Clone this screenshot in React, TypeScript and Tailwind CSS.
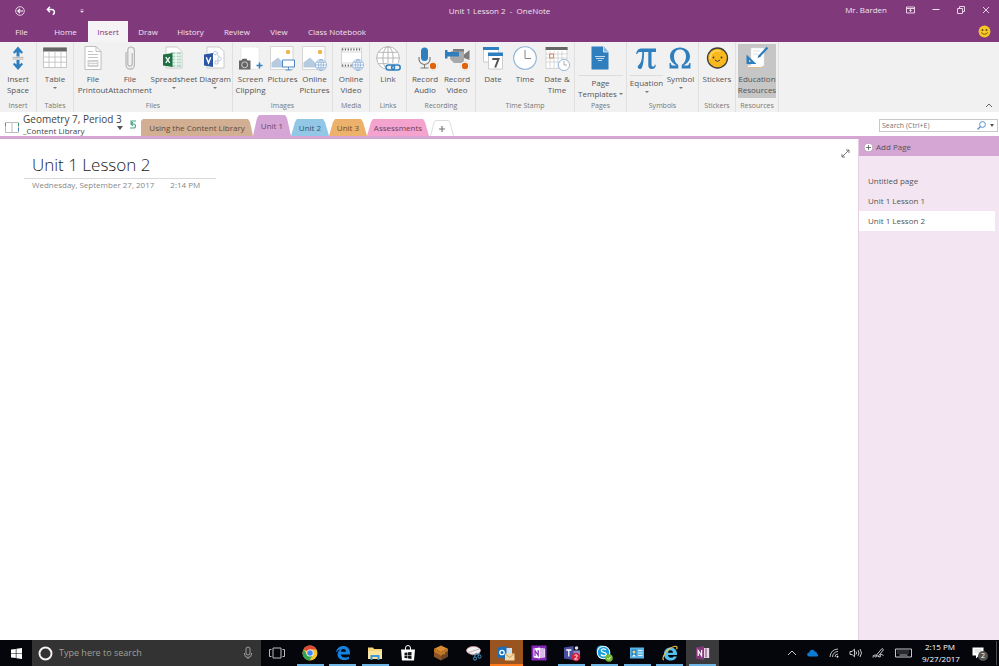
import { useState, type ReactNode } from 'react';

const BLUE = '#2f7fbf';

/* ---------- shared icon pieces ---------- */

function Svg({ w, h, box, label, children }: { w: number; h: number; box?: string; label?: string; children: ReactNode }) {
  return (
    <svg width={w} height={h} viewBox={box ?? `0 0 ${w} ${h}`} fill="none" className="shrink-0" aria-hidden={label ? undefined : true} aria-label={label}>
      {children}
    </svg>
  );
}

function Globe({ cx, cy, r, stroke }: { cx: number; cy: number; r: number; stroke: string }) {
  return (
    <g stroke={stroke} strokeWidth={r > 8 ? 0.8 : 0.7} fill="#fff">
      <circle cx={cx} cy={cy} r={r} />
      <ellipse cx={cx} cy={cy} rx={r * 0.45} ry={r} fill="none" />
      <path d={`M${cx - r} ${cy}h${r * 2}M${cx} ${cy - r}v${r * 2}M${cx - r * 0.85} ${cy - r * 0.5}h${r * 1.7}M${cx - r * 0.85} ${cy + r * 0.5}h${r * 1.7}`} />
    </g>
  );
}

function RecordDot() {
  return (
    <>
      <circle cx="20" cy="20" r="4.6" fill="#fff" stroke="#d0d0d0" strokeWidth="0.5" />
      <circle cx="20" cy="20" r="3.2" fill="#e0640f" />
    </>
  );
}

/* ---------- ribbon icons, drawn on a 25 unit square ---------- */

const icons: Record<string, ReactNode> = {
  space: (
    <>
      <path d="M12 .500l5 5.800-1.300 1.500-2.200-1.700V10.500h-3V6.100L8.300 7.800 7 6.300zM12 24l5-5.800-1.300-1.500-2.200 1.700V14h-3v4.400l-2.200-1.700L7 18.200z" fill={BLUE} />
      <path d="M6.500 11.400h11M6.500 13.100h11" stroke="#a9a9a9" strokeWidth="0.800" />
    </>
  ),
  table: (
    <>
      <path d="M.5 2h23v19.500H.5z" fill="#fff" stroke="#b0b0b0" strokeWidth="0.700" />
      <path d="M.2 1.500h23.600v4H.2z" fill="#666" />
      <path d="M6 5.500v16M12 5.500v16M18 5.500v16M.5 11h23M.5 16.200h23" stroke="#bdbdbd" strokeWidth="0.800" />
    </>
  ),
  printout: (
    <>
      <path d="M4 .5h11l5 5v18H4z" fill="#fff" stroke="#b0b0b0" strokeWidth="0.800" />
      <path d="M15 .5v5h5" stroke="#b0b0b0" strokeWidth="0.800" />
      <path d="M7 5.500h5M7 8.500h10M7 11.500h10" stroke="#c4c4c4" />
      <path d="M6.500 14h11v7h-11z" fill="#d2d2d2" />
      <path d="M8 16.500h8M8 18.500h8" stroke="#fff" strokeWidth="0.800" />
    </>
  ),
  clip: (
    <path d="M8 6v13a4.200 4.200 0 0 0 8.400 0V4.300a3.300 3.300 0 0 0-6.600 0V18a2.200 2.200 0 0 0 4.400 0V7" stroke="#b5b5b5" strokeWidth="1.200" />
  ),
  sheet: (
    <>
      <path d="M4 1h11l5 4.500V22H4z" fill="#fff" stroke="#b7b7b7" strokeWidth="0.700" />
      <path d="M9 6h10v15H9z" fill="#b5dbc6" />
      <path d="M9 9h10M9 12h10M9 15h10M9 18h10M14 6v15" stroke="#fff" />
      <path d="M1 8.500l9.500-1.500v14L1 19.500z" fill="#1c7044" />
      <path d="M3.800 11.200l4 5.600M7.800 11.200l-4 5.600" stroke="#fff" strokeWidth="1.300" />
    </>
  ),
  diagram: (
    <>
      <path d="M4 1h12l5 4.500V22H4z" fill="#fff" stroke="#b7b7b7" strokeWidth="0.700" />
      <path d="M12 5l3 2-3 2-2-2zM16.500 11a1.800 1.800 0 1 0 .1 0M12 15h3v3h-3zM14 8l2 3M16 14l-2 2" stroke="#aebfd5" strokeWidth="0.800" />
      <path d="M1 8.500l9-1.500v14l-9-1.500z" fill="#2a56a4" />
      <path d="M3.300 11.200l2.200 5.600 2.300-5.600" stroke="#fff" strokeWidth="1.400" />
    </>
  ),
  screen: (
    <>
      <path d="M3 1h18v22H3z" fill="#fff" stroke="#d6d6d6" strokeWidth="0.700" strokeDasharray="1.500 1" />
      <path d="M1 14.500h2.500l1-1.700h4l1 1.700H12.500v9H1z" fill="#666" />
      <circle cx="6.700" cy="18.800" r="3" fill="#666" stroke="#ddd" strokeWidth="0.900" />
      <path d="M21.500 16.500v6M18.500 19.500h6" stroke={BLUE} strokeWidth="1.500" />
    </>
  ),
  pictures: (
    <>
      <path d="M.5.500h22.500v23H.5z" fill="#fff" stroke="#c6c6c6" strokeWidth="0.700" />
      <path d="M1.500 21.500v-5L8 11.500l6 6v4z" fill="#b7cbe0" />
      <circle cx="18" cy="6" r="2.200" fill="#f4b74e" />
      <path d="M12.500 14h12v7h-12z" fill="#fff" stroke="#4c87c4" strokeWidth="1" />
      <path d="M18.500 21v3M15.500 24h6" stroke="#4c87c4" strokeWidth="0.900" />
    </>
  ),
  onlinePictures: (
    <>
      <path d="M.5.500h22.500v23H.5z" fill="#fff" stroke="#c6c6c6" strokeWidth="0.700" />
      <path d="M1.500 21.500v-5L8 11.500l6 6v4z" fill="#b7cbe0" />
      <circle cx="18" cy="6" r="2.200" fill="#f4b74e" />
      <Globe cx={19} cy={19} r={5.500} stroke="#7ea6d1" />
    </>
  ),
  video: (
    <>
      <path d="M2.500 2h20v19h-20z" fill="#fff" stroke="#bdbdbd" strokeWidth="0.600" />
      <path d="M3 3.500h19M3 19.500h13" stroke="#696969" strokeWidth="1.800" strokeDasharray="1.300 1.500" />
      <path d="M3 6h19M3 17h13" stroke="#c8c8c8" strokeWidth="0.700" />
      <Globe cx={19} cy={19} r={5.500} stroke="#7ea6d1" />
    </>
  ),
  link: (
    <>
      <Globe cx={12} cy={12} r={11.300} stroke="#a8a8a8" />
      <g stroke="#f1f1f1" strokeWidth="3.500"><rect x="10.500" y="19" width="8" height="5" rx="2.500" /><rect x="16" y="19" width="8" height="5" rx="2.500" /></g>
      <g stroke={BLUE} strokeWidth="1.500"><rect x="10" y="19" width="8.500" height="5" rx="2.500" /><rect x="15.700" y="19" width="8.500" height="5" rx="2.500" /></g>
    </>
  ),
  mic: (
    <>
      <rect x="8" y="1.500" width="7" height="13.500" rx="3.500" fill={BLUE} />
      <path d="M6 11v2a5.500 5.500 0 0 0 11 0v-2M11.500 18.500V22M7.500 22h8" stroke="#7c7c7c" strokeWidth="1.200" />
      <RecordDot />
    </>
  ),
  camera: (
    <>
      <path d="M6 5h13v12H9l-4-4z" fill="#a9a9a9" />
      <path d="M19 8.500l5.500-4.500v10L19 12zM8 3h11v2.500H8z" fill="#7d7d7d" />
      <path d="M0 4h2.500v2H14v4.500H2.500v2H0z" fill={BLUE} />
      <RecordDot />
    </>
  ),
  date: (
    <>
      <path d="M2.500 2h15v14h-15z" fill="#fff" stroke="#b0b0b0" strokeWidth="0.600" />
      <path d="M2 1h16v3H2z" fill={BLUE} />
      <path d="M7.500 8h14v15h-14z" fill="#fff" stroke="#b0b0b0" strokeWidth="0.600" />
      <path d="M7 6.500h15v3.500H7z" fill={BLUE} />
      <path d="M11.300 13h6.200l-3.300 8.500" stroke="#555" strokeWidth="2" />
    </>
  ),
  time: (
    <>
      <circle cx="12" cy="12" r="11.300" fill="#fff" stroke="#8fb5d8" strokeWidth="1.100" />
      <path d="M12 4v8.500h6" stroke="#858585" strokeWidth="1" />
    </>
  ),
  dateTime: (
    <>
      <path d="M1 1.500h21v21H1z" fill="#fff" stroke="#c0c0c0" strokeWidth="0.600" />
      <path d="M.6 1h22v3H.6z" fill="#666" />
      <path d="M5 5v17M9 5v17M13 5v17M17 5v17M1 8h21M1 12h21M1 16h21" stroke="#c9c9c9" strokeWidth="0.700" />
      <path d="M4.500 8h4v4h-4z" stroke="#e8793e" strokeWidth="0.900" />
      <circle cx="19" cy="19" r="5.600" fill="#fff" stroke="#8fb5d8" strokeWidth="0.900" />
      <path d="M19 15v4h3" stroke="#999" strokeWidth="0.800" />
    </>
  ),
  page: (
    <>
      <path d="M3.500.500h12l5 5.500v17.500h-17z" fill={BLUE} />
      <path d="M15.500.500V6h5" fill="#8db9df" stroke="#f1f1f1" strokeWidth="0.800" />
      <path d="M7 10.500h10M8 12.500h8M10 14.500h4" stroke="#d2e4f3" strokeWidth="0.900" />
    </>
  ),
  pi: (
    <path d="M2 8C3 3.500 5 2.500 8 2.500h14V6h-4.500v12.500c0 1.500.5 2 1.500 2s1.500-.5 1.800-1.800h1c-.1 3-1.600 4.300-4 4.300-2.600 0-3.500-1.500-3.500-4V6h-4.300c0 6-.5 11-1.600 14.500C7.800 22.500 7 23 5.800 23c-1.300 0-2.100-.8-2.100-1.900 0-1.200.9-2 2.100-3.300C7.500 16 8.200 12 8.300 6H7C5 6 3.900 6.300 3 8z" fill={BLUE} />
  ),
  omega: (
    <path d="M1.500 22.500V17h1.200c.4 2 1 2.500 2.600 2.500h3.400C4.500 17.500 2 14.500 2 10.300 2 5 6.300 1.500 12 1.500S22 5 22 10.300c0 4.200-2.500 7.200-6.700 9.200h3.400c1.600 0 2.200-.5 2.600-2.500h1.200v5.500h-8.800V19c2.700-1.800 4.300-4.600 4.300-8.500 0-4.300-2.300-7-6-7s-6 2.700-6 7c0 3.900 1.600 6.700 4.300 8.500v3.500z" fill={BLUE} />
  ),
  sticker: (
    <>
      <circle cx="12.500" cy="12" r="10" fill="#f9b81d" stroke="#3c3c3c" strokeWidth="1.300" />
      <path d="M5.500 13a7 7 0 0 1 10-7.500" stroke="#ffd768" strokeWidth="1.500" />
      <circle cx="8.500" cy="11.500" r="1" fill="#3c3c3c" />
      <circle cx="16.500" cy="11.500" r="1" fill="#3c3c3c" />
      <path d="M10 14q2.500 3 5 0" stroke="#3c3c3c" strokeWidth="1" />
    </>
  ),
  education: (
    <>
      <path d="M6 2h13v18H6z" fill="#fff" stroke="#ddd" strokeWidth="0.500" />
      <path d="M8 5h7M8 8h5" stroke="#d5d5d5" strokeWidth="0.800" />
      <path d="M3 19.500h14v2H3z" fill="#fff" />
      <path d="M3 21.500h14" stroke="#e8b98b" />
      <path d="M1.500 8.500l10 9.500h-10z" fill={BLUE} />
      <path d="M4 13.500l2.300 2.300H4z" fill="#d9d9d9" />
      <path d="M22.500 1.500l-8 8.500" stroke={BLUE} strokeWidth="2.200" />
      <path d="M13.800 8.800l1.900 2-3.200 1.200z" fill="#2d6aa3" />
    </>
  ),
};

/* ---------- ribbon ---------- */

type Tool = { icon: string; lines: string[]; width: string; arrow?: boolean; inlineArrow?: boolean; split?: boolean; active?: boolean };
type Group = { name: string; width: string; tools: Tool[] };

const groups: Group[] = [
  { name: 'Insert', width: 'w-[37px]', tools: [{ icon: 'space', lines: ['Insert', 'Space'], width: 'w-9' }] },
  { name: 'Tables', width: 'w-[37px]', tools: [{ icon: 'table', lines: ['Table'], width: 'w-9', arrow: true }] },
  {
    name: 'Files', width: 'w-[159px]', tools: [
      { icon: 'printout', lines: ['File', 'Printout'], width: 'w-9' },
      { icon: 'clip', lines: ['File', 'Attachment'], width: 'w-[38px]' },
      { icon: 'sheet', lines: ['Spreadsheet'], width: 'w-[50px]', arrow: true },
      { icon: 'diagram', lines: ['Diagram'], width: 'w-8', arrow: true },
    ],
  },
  {
    name: 'Images', width: 'w-[100px]', tools: [
      { icon: 'screen', lines: ['Screen', 'Clipping'], width: 'w-9' },
      { icon: 'pictures', lines: ['Pictures'], width: 'w-7' },
      { icon: 'onlinePictures', lines: ['Online', 'Pictures'], width: 'w-9' },
    ],
  },
  { name: 'Media', width: 'w-[37px]', tools: [{ icon: 'video', lines: ['Online', 'Video'], width: 'w-9' }] },
  { name: 'Links', width: 'w-[37px]', tools: [{ icon: 'link', lines: ['Link'], width: 'w-9' }] },
  {
    name: 'Recording', width: 'w-[69px]', tools: [
      { icon: 'mic', lines: ['Record', 'Audio'], width: 'w-8' },
      { icon: 'camera', lines: ['Record', 'Video'], width: 'w-8' },
    ],
  },
  {
    name: 'Time Stamp', width: 'w-[99px]', tools: [
      { icon: 'date', lines: ['Date'], width: 'w-9' },
      { icon: 'time', lines: ['Time'], width: 'w-7' },
      { icon: 'dateTime', lines: ['Date &', 'Time'], width: 'w-9' },
    ],
  },
  { name: 'Pages', width: 'w-[52px]', tools: [{ icon: 'page', lines: ['Page', 'Templates'], width: 'w-12', inlineArrow: true, split: true }] },
  {
    name: 'Symbols', width: 'w-[72px]', tools: [
      { icon: 'pi', lines: ['Equation'], width: 'w-9', arrow: true, split: true },
      { icon: 'omega', lines: ['Symbol'], width: 'w-8', arrow: true },
    ],
  },
  { name: 'Stickers', width: 'w-[37px]', tools: [{ icon: 'sticker', lines: ['Stickers'], width: 'w-9' }] },
  { name: 'Resources', width: 'w-[43px]', tools: [{ icon: 'education', lines: ['Education', 'Resources'], width: 'w-[38px]', active: true }] },
];

function Arrow() {
  return (
    <Svg w={4} h={2}>
      <path d="M0 0h4L2 2z" fill="#777" />
    </Svg>
  );
}

function ToolButton({ tool }: { tool: Tool }) {
  return (
    <button type="button" className={`flex h-[54px] shrink-0 flex-col items-center pt-0.5 ${tool.width} ${tool.active ? 'bg-[#c6c6c6]' : ''}`}>
      <Svg w={25} h={25} box="0 0 25 25">{icons[tool.icon]}</Svg>
      <span className={`flex flex-col items-center text-[8px] leading-[11px] whitespace-nowrap text-[#555] ${tool.split ? 'mt-1 border-t border-[#dcdcdc] pt-px' : 'mt-0.5'}`}>
        {tool.lines.map((line, i) => (
          <span key={line} className="flex items-center gap-0.5">
            {line}
            {tool.inlineArrow && i === tool.lines.length - 1 && <Arrow />}
          </span>
        ))}
        {tool.arrow && <span className="flex h-2 items-center"><Arrow /></span>}
      </span>
    </button>
  );
}

function Ribbon() {
  return (
    <div className="flex h-[70px] bg-[#f1f1f1]">
      {groups.map((g) => (
        <section key={g.name} aria-label={g.name} className={`flex shrink-0 flex-col items-center border-r border-[#e0e0e0] pt-0.5 ${g.width}`}>
          <div className="flex flex-1 justify-center">
            {g.tools.map((t) => <ToolButton key={t.icon} tool={t} />)}
          </div>
          <span className="pb-px text-[7px] leading-[10px] text-[#777]">{g.name}</span>
        </section>
      ))}
      <button type="button" aria-label="Collapse the ribbon" className="mt-auto mr-1.5 mb-1 ml-auto">
        <Svg w={8} h={5}><path d="M1 4l3-3 3 3" stroke="#666" /></Svg>
      </button>
    </div>
  );
}

/* ---------- title bar ---------- */

const menu = [
  ['File', 'w-[43px]'], ['Home', 'w-[45px]'], ['Insert', 'w-10'], ['Draw', 'w-10'], ['History', 'w-[45px]'],
  ['Review', 'w-12'], ['View', 'w-9'], ['Class Notebook', 'w-20'],
];

function TitleBar() {
  return (
    <header className="bg-[#80397b] text-[8px] text-[#f0e2ef]">
      <div className="grid h-[21px] grid-cols-3 items-center">
        <div className="flex items-center pl-[15px]">
          <button type="button" aria-label="Back" className="mr-[21px]">
            <Svg w={10} h={10}><circle cx="5" cy="5" r="4.300" stroke="#efe0ee" strokeWidth="0.900" /><path d="M8 5H2.800M5 2.800L2.800 5 5 7.200" stroke="#fff" strokeWidth="1.100" /></Svg>
          </button>
          <button type="button" aria-label="Undo" className="mr-6">
            <Svg w={10} h={10}><path d="M4 .800L1.300 3.500 4 6.200M1.500 3.500h4.200a2.700 2.700 0 0 1 1 5.200" stroke="#fff" strokeWidth="1.400" /></Svg>
          </button>
          <button type="button" aria-label="Customize toolbar">
            <Svg w={4} h={4}><path d="M.5.500h3M.5 2h3L2 3.500z" fill="#fff" stroke="#e6d3e5" strokeWidth="0.500" /></Svg>
          </button>
        </div>
        <span className="text-center">Unit 1 Lesson 2&nbsp; -&nbsp; OneNote</span>
        <div className="flex items-center justify-end gap-[17px] pr-[9px] pb-0.5">
          <span className="mr-0.5">Mr. Barden</span>
          <button type="button" aria-label="Ribbon display options"><Svg w={9} h={8}><path d="M.5 1h8v6h-8zM.5 2.500h8M4.500 6V3.500M3.200 4.700l1.300-1.300 1.300 1.300" stroke="#f0e2ef" strokeWidth="0.900" /></Svg></button>
          <button type="button" aria-label="Minimize"><Svg w={8} h={8}><path d="M.5 3.500h7" stroke="#f0e2ef" /></Svg></button>
          <button type="button" aria-label="Restore"><Svg w={8} h={8}><path d="M.5 2.500h5v5h-5zM2.500 2.500v-2h5v5h-2" stroke="#f0e2ef" strokeWidth="0.900" /></Svg></button>
          <button type="button" aria-label="Close"><Svg w={8} h={8}><path d="M1 1l6 6M7 1L1 7" stroke="#f0e2ef" strokeWidth="0.900" /></Svg></button>
        </div>
      </div>
      <nav className="flex h-[21px] items-stretch">
        {menu.map(([name, width]) => (
          <button key={name} type="button" className={`${width} text-center ${name === 'Insert' ? 'bg-[#f6f3f6] text-[#80397b]' : ''}`}>{name}</button>
        ))}
        <button type="button" aria-label="Send feedback" className="mr-2 ml-auto">
          <Svg w={13} h={13}><circle cx="6.500" cy="6.500" r="5.900" fill="#f6c625" /><circle cx="4.500" cy="5" r="0.900" fill="#57430c" /><circle cx="8.500" cy="5" r="0.900" fill="#57430c" /><path d="M3.200 7.500q3.300 3.600 6.600 0" stroke="#6b510c" strokeWidth="0.900" /></Svg>
        </button>
      </nav>
    </header>
  );
}

/* ---------- notebook and section tabs ---------- */

const slanted = '[clip-path:polygon(0_100%,4px_3px,6px_0,calc(100%_-_6px)_0,calc(100%_-_4px)_3px,100%_100%)]';
const leading = '[clip-path:polygon(0_100%,0_2px,2px_0,calc(100%_-_5px)_0,calc(100%_-_3px)_3px,100%_100%)]';

const sections = [
  { name: 'Using the Content Library', style: `h-[17px] w-[112px] bg-[#d2ae92] text-[#5c4c40] ${leading}` },
  { name: 'Unit 1', style: `h-[21px] w-[38px] bg-[#d5a6d5] text-[#6b486b] ${slanted}` },
  { name: 'Unit 2', style: `h-[17px] w-[38px] bg-[#92c7e6] text-[#33566a] ${slanted}` },
  { name: 'Unit 3', style: `h-[17px] w-[38px] bg-[#ecb26c] text-[#6b4c25] ${slanted}` },
  { name: 'Assessments', style: `h-[17px] w-[62px] bg-[#f4a3cf] text-[#6b4059] ${slanted}` },
];

function SectionBar() {
  const [query, setQuery] = useState('');
  return (
    <div className="flex h-[27px] border-b-[3px] border-[#d5a5d3] bg-white">
      <button type="button" className="flex w-[141px] shrink-0 items-center pl-[5px] text-left">
        <span className="mt-1.5">
          <Svg w={14} h={13}>
            <path d="M.5 1.500h6l.5.700.5-.700h6v10h-6l-.5.500-.5-.500h-6zM7 2v10" stroke="#aaa" strokeWidth="0.800" />
            <path d="M.5 2v3" stroke="#d9553f" /><path d="M13.500 2v3" stroke="#3b9a63" /><path d="M13.500 7v3" stroke="#3b7fc0" />
          </Svg>
        </span>
        <span className="ml-1 flex w-[92px] flex-col whitespace-nowrap text-[#444]">
          <span className="text-[10px] leading-[14px]">Geometry 7, Period 3</span>
          <span className="text-[8px] leading-[10px]">_Content Library</span>
        </span>
        <span className="mt-2 ml-0.5"><Svg w={6} h={4}><path d="M0 0h6L3 4z" fill="#555" /></Svg></span>
        <span className="ml-1.5"><Svg w={8} h={9}><path d="M7 1H2v3h2.500a2 2 0 0 1 0 4H1M2 4l2-1.800M2 4l2 1.800" stroke="#4aa583" strokeWidth="1.100" /></Svg></span>
      </button>
      <nav aria-label="Sections" className="flex items-end">
        {sections.map((s) => (
          <button key={s.name} type="button" className={`shrink-0 pt-px text-center text-[8px] whitespace-nowrap ${s.style}`}>{s.name}</button>
        ))}
        <button type="button" aria-label="Create a new section" className="ml-px">
          <Svg w={24} h={16}><path d="M.5 16L4 2.500Q4.500.500 6 .500h12q1.500 0 2 2L23.500 16" fill="#fff" stroke="#ddd" /><path d="M12 6v6M9 9h6" stroke="#777" strokeWidth="1.200" /></Svg>
        </button>
      </nav>
      <div className="mt-[7px] mr-px ml-auto flex h-[13px] w-[119px] items-center gap-1 border border-[#c9c9c9] pr-[3px] pl-0.5">
        <input aria-label="Search notes" value={query} onChange={(e) => setQuery(e.target.value)} placeholder="Search (Ctrl+E)" className="h-[11px] w-full min-w-0 bg-transparent text-[7px] leading-[11px] text-[#444] outline-none placeholder:text-[#777]" />
        <Svg w={9} h={9}><circle cx="5.500" cy="3.500" r="2.900" stroke="#5591c9" /><path d="M3.500 5.500L.5 8.500" stroke="#5591c9" strokeWidth="1.300" /></Svg>
        <Svg w={4} h={3}><path d="M0 0h4L2 3z" fill="#555" /></Svg>
      </div>
    </div>
  );
}

/* ---------- page and page list ---------- */

const pages = ['Untitled page', 'Unit 1 Lesson 1', 'Unit 1 Lesson 2'];

function Workspace() {
  return (
    <div className="flex flex-1">
      <main className="flex flex-1 items-start justify-between bg-white pt-3.5 pr-2 pl-6">
        <article className="w-48">
          <h1 className="border-b border-[#d8d8d8] pb-px pl-2 text-[17px] leading-6 font-light text-[#222]">Unit 1 Lesson 2</h1>
          <p className="flex gap-4 pl-2 text-[8px] leading-3 text-[#888]"><span>Wednesday, September 27, 2017</span><span>2:14 PM</span></p>
        </article>
        <button type="button" aria-label="Full page view" className="-mt-1"><Svg w={9} h={9}><path d="M5 1h3v3M4 8H1V5M1.200 7.800l6.600-6.600" stroke="#666" strokeWidth="0.900" /></Svg></button>
      </main>
      <aside className="w-[141px] shrink-0 border-l border-[#e5cfe4] bg-[#f3e6f2] text-[8px] text-[#555]">
        <button type="button" className="flex h-[17px] w-full items-center gap-[3px] bg-[#d5a5d3] pb-px pl-[5px]">
          <Svg w={9} h={9}><circle cx="4.500" cy="4.500" r="4.100" fill="#fff" stroke="#999" strokeWidth="0.500" /><path d="M4.500 2v5M2 4.500h5" stroke="#666" strokeWidth="0.900" /></Svg>
          Add Page
        </button>
        <ul className="mt-[15px] mr-1">
          {pages.map((p, i) => (
            <li key={p}>
              <button type="button" className={`block h-5 w-full pl-[9px] text-left ${i === 2 ? 'bg-white' : ''}`}>{p}</button>
            </li>
          ))}
        </ul>
      </aside>
    </div>
  );
}

/* ---------- taskbar, icons drawn on an 18 unit square ---------- */

type App = { name: string; art: ReactNode; open?: boolean; style?: string };

const apps: App[] = [
  { name: 'Task View', art: <g stroke="#bbb"><path d="M5 4h8v10H5z" /><path d="M3.500 5.500h-2v7h2M14.500 5.500h2v7h-2" /></g> },
  { name: 'Chrome', open: true, art: <><circle cx="9" cy="9" r="7.500" fill="#f4c22b" /><path d="M9 9L2.500 5.300A7.500 7.500 0 0 1 15.600 5.500H9z" fill="#dd4a3c" /><path d="M2.500 5.300A7.500 7.500 0 0 0 8.500 16.500L12 10.500 9 9 6 10.500z" fill="#34a353" /><circle cx="9" cy="9" r="3.600" fill="#fff" /><circle cx="9" cy="9" r="2.800" fill="#4384f0" /></> },
  { name: 'Edge', open: true, art: <path d="M2 8.500C2.500 4.500 5.500 2 9.300 2c4 0 6.700 2.700 6.700 7v1.500H6.800c.2 2 1.800 3 4.200 3 1.500 0 3-.4 4-1V15c-1.300.7-3 1-4.700 1C6.300 16 3.500 14 3.500 10.500c0-2.300 1.300-4.200 3.400-5.100C4.500 5.600 3 6.800 2 8.500zm4.900-.8h5C11.900 6 11 5 9.400 5S7 6.200 6.900 7.700z" fill="#1682e0" /> },
  { name: 'File Explorer', open: true, art: <><path d="M2 3.500h5l1 1.500h8v10H2z" fill="#f6d478" /><path d="M2 7h14v8H2z" fill="#fbe49c" /><path d="M4.500 16v-5h9v5h-2v-3h-5v3z" fill="#3d9bdb" /></> },
  { name: 'Store', art: <><path d="M2 5.500h14l-1 11H3z" fill="#fff" /><path d="M6.500 6V4a2.500 2.500 0 0 1 5 0v2" stroke="#fff" /><path d="M5.500 8.800l3-.4v2.800h-3zM9 8.300l3.500-.4v3.300H9zM5.500 11.700h3v2.600l-3-.4zM9 11.700h3.500V15L9 14.500z" fill="#14161a" /></> },
  { name: 'Minecraft', art: <><path d="M9 1.500l7 3.300-7 3.400-7-3.400z" fill="#d88b32" /><path d="M2 4.800l7 3.400v8.300l-7-3.800z" fill="#8a5527" /><path d="M16 4.800L9 8.200v8.300l7-3.800z" fill="#6b4525" /><path d="M2 4.800l7 3.400 7-3.400v2l-3 1.700v2l-2-.5-2 2-3-2.500-2-.5-2-2z" fill="#c57927" /></> },
  { name: 'Snipping Tool', art: <><ellipse cx="8.500" cy="6.500" rx="7" ry="4" fill="#f4eef0" stroke="#d49b9b" strokeWidth="0.700" /><path d="M3.500 8.500L14 5M7 11l8-2" stroke="#aaa" strokeWidth="0.800" /><path d="M11 9l-1.500 3.500M11 9l3 2.500" stroke="#49a3d8" /><circle cx="10" cy="14.500" r="1.600" stroke="#49a3d8" /><circle cx="14.500" cy="12.500" r="1.600" stroke="#49a3d8" /></> },
  { name: 'Outlook', style: 'bg-[#9a5420] border-b-2 border-[#ff7a1a]', art: <><path d="M9 4h6v7H9z" fill="#cfe2f3" /><path d="M1 3.500L9.500 2v13L1 13.500z" fill="#1670bf" /><circle cx="5" cy="8.500" r="2.200" stroke="#fff" strokeWidth="1.300" /><path d="M8 9.500h9.500v7H8z" fill="#f6d9a6" /><path d="M8 9.500l4.700 4 4.800-4" stroke="#b98b4c" strokeWidth="0.800" /></> },
  { name: 'OneNote app', art: <><path d="M1.500 1.500h15v15h-15z" fill="#8529b6" /><path d="M9 4h4.500v10H9z" fill="#d9b8ea" /><path d="M13.500 4.500h1.300v9h-1.300z" fill="#fff" /><path d="M3.500 4.500L10 3.500v11l-6.500-1z" fill="#fff" /><path d="M5 12V6.500l3.200 5V6" stroke="#8529b6" strokeWidth="1.200" /></> },
  { name: 'Teams', open: true, art: <><circle cx="13.500" cy="4" r="1.800" fill="#d8d8f0" /><path d="M10 6.500h7v6h-7z" fill="#8a8cd0" /><path d="M1 3.500L10.500 2v14L1 14.500z" fill="#4a4f9f" /><path d="M3.200 6h5.200M5.800 6v6.500" stroke="#fff" strokeWidth="1.300" /><circle cx="13" cy="13" r="4.300" fill="#d81f3c" /><path d="M11.500 11.500q1.500-1.500 2.800 0 .5 1.200-2.800 3.600h3.200" stroke="#fff" strokeWidth="0.900" /></> },
  { name: 'Skype', open: true, art: <><circle cx="6" cy="6" r="4.500" fill="#19a7e8" /><circle cx="11" cy="11" r="4.500" fill="#19a7e8" /><circle cx="8.500" cy="8.500" r="6.800" fill="#f6fbff" /><circle cx="8.500" cy="8.500" r="5.700" fill="#169fdf" /><path d="M11 6C10 4.300 6.300 4.500 6.300 6.500c0 2.500 5 1.200 5 3.700 0 2-4 2.300-5.300.3" stroke="#fff" strokeWidth="1.400" /><circle cx="14" cy="14" r="3.800" fill="#73b62b" /><path d="M12.300 14l1.300 1.300 2.200-2.500" stroke="#fff" strokeWidth="0.900" /></> },
  { name: 'Contacts', open: true, art: <><path d="M2 3.500h14v11H2z" fill="#58b3e8" /><path d="M3.500 5.500h5v7h-5z" fill="#2180c5" /><circle cx="6" cy="8" r="1.500" fill="#f3d37c" /><path d="M4 12.500q2-4 4 0z" fill="#fff" /><path d="M10 6.500h4.500M10 9h4.500M10 11.500h4.500" stroke="#e2f3fd" /></> },
  { name: 'Internet Explorer', open: true, art: <><path d="M3 10C3 6 5.700 3.500 9.500 3.500S16 6 16 10v1H7c.2 2 1.400 2.700 3 2.700 1.200 0 2-.4 2.600-1.200h3.200c-1 2.700-3 4-6 4C5.700 16.500 3 14 3 10zm4-1.300h5c-.1-1.700-1-2.500-2.500-2.500S7.200 7 7 8.700z" fill="#55bff0" /><path d="M3 16C-.5 15.500 5 5 13 2.500c3-.8 3.500.5 2.700 2.800" stroke="#f1bf3a" strokeWidth="1.200" /></> },
  { name: 'OneNote', open: true, style: 'bg-[#3a3a3d]', art: <><path d="M8 4h8v10H8z" fill="#ead7e8" /><path d="M12 4.500v9M15.500 4v10" stroke="#80397b" /><path d="M2 3.500L10 2v14l-8-1.500z" fill="#80397b" /><path d="M4.200 12V6.500l3.400 5.300V6" stroke="#fff" strokeWidth="1.200" /></> },
];

function Taskbar() {
  const [query, setQuery] = useState('');
  return (
    <footer className="flex h-[26px] items-stretch bg-[#04060c] text-white">
      <button type="button" aria-label="Start" className="flex w-8 shrink-0 items-center justify-center">
        <Svg w={11} h={11}><path d="M0 1.500L4.800.900v4.300H0zM5.400.800L11 0v5.200H5.400zM0 5.800h4.800v4.300L0 9.500zM5.400 5.800H11V11l-5.600-.8z" fill="#fff" /></Svg>
      </button>
      <div className="flex w-[229px] shrink-0 items-center gap-1.5 bg-[#333] px-1.5">
        <Svg w={15} h={15}><circle cx="7.500" cy="7.500" r="6" stroke="#f5f5f5" strokeWidth="1.900" /></Svg>
        <input aria-label="Search Windows" value={query} onChange={(e) => setQuery(e.target.value)} placeholder="Type here to search" className="h-4 w-full min-w-0 bg-transparent text-[9px] leading-4 outline-none placeholder:text-[#a0a096]" />
        <Svg w={14} h={14}><rect x="5" y="1" width="4" height="8" rx="2" stroke="#aaa" strokeWidth="0.900" /><path d="M3.500 7v1a3.500 3.500 0 0 0 7 0V7M7 11.500V13" stroke="#aaa" strokeWidth="0.900" /></Svg>
      </div>
      <nav aria-label="Open apps" className="grid w-[458px] shrink-0 grid-cols-14">
        {apps.map((a) => (
          <button key={a.name} type="button" aria-label={a.name} className={`flex flex-col items-center justify-between pt-1 ${a.style ?? ''}`}>
            <Svg w={18} h={18} box="0 0 18 18">{a.art}</Svg>
            {a.open && <span className="h-0.5 w-[27px] bg-[#6db5e4]" />}
          </button>
        ))}
      </nav>
      <div className="ml-auto flex items-center gap-2.5 pr-0.5">
        <Svg w={10} h={6} label="Show hidden icons"><path d="M1 5l4-4 4 4" stroke="#ccc" /></Svg>
        <Svg w={12} h={8} label="OneDrive"><path d="M2 7.500a2 2 0 0 1 .3-4A3 3 0 0 1 8 2.500a2.500 2.500 0 0 1 2 2.300 1.400 1.400 0 0 1 .2 2.700z" fill="#0f7ad1" /></Svg>
        <Svg w={10} h={10} label="Network"><path d="M1 9A8 8 0 0 1 9 1M3.500 9A5.500 5.500 0 0 1 9 3.500M6 9a3 3 0 0 1 3-3" stroke="#ccc" strokeWidth="0.900" /><circle cx="8.500" cy="8.700" r="0.900" fill="#fff" /></Svg>
        <Svg w={13} h={10} label="Volume"><path d="M1 3.500h2l2.500-2.300v7.600L3 6.500H1z" stroke="#ddd" strokeWidth="0.900" /><path d="M7 3.500q1 1.500 0 3M9 2.200q2 2.800 0 5.600M11 1q3 4 0 8" stroke="#ddd" strokeWidth="0.900" /></Svg>
        <Svg w={13} h={12} label="Windows Ink"><path d="M1 10.500q-.5-2.500 2-2.500t1.500 1.500-2-.5M4.500 8L10 1.500l1.500 1.200L6 9.500zM6 9.500q3 1.500 2.500-1t3 0" stroke="#ddd" strokeWidth="0.900" /></Svg>
        <Svg w={17} h={10} label="Touch keyboard"><path d="M.5 1h16v8H.5z" stroke="#ddd" strokeWidth="0.900" /><path d="M2.500 3h12M2.500 5h12" stroke="#aaa" strokeWidth="0.900" strokeDasharray="1 1" /><path d="M4.500 7h8" stroke="#ccc" strokeWidth="0.900" /></Svg>
        <time className="w-9 text-center text-[8px] leading-3 whitespace-nowrap">2:15 PM<br />9/27/2017</time>
        <button type="button" aria-label="2 notifications" className="relative mr-0.5 ml-1">
          <Svg w={12} h={12}><path d="M.5.500h11v8H7l-3 3v-3H.5z" fill="#fff" /><path d="M2.500 3h7M2.500 5h7" stroke="#aaa" strokeWidth="0.600" /></Svg>
          <span className="absolute top-1 left-1.5 flex size-2.5 items-center justify-center rounded-full bg-[#555] text-[7px] leading-[10px]">2</span>
        </button>
        <span className="h-6 w-px bg-[#4a4a4a]" />
      </div>
    </footer>
  );
}

export default function App() {
  return (
    <div className="flex min-h-screen flex-col overflow-hidden bg-white font-['Open_Sans','Noto_Sans',sans-serif]">
      <TitleBar />
      <Ribbon />
      <SectionBar />
      <Workspace />
      <Taskbar />
    </div>
  );
}
